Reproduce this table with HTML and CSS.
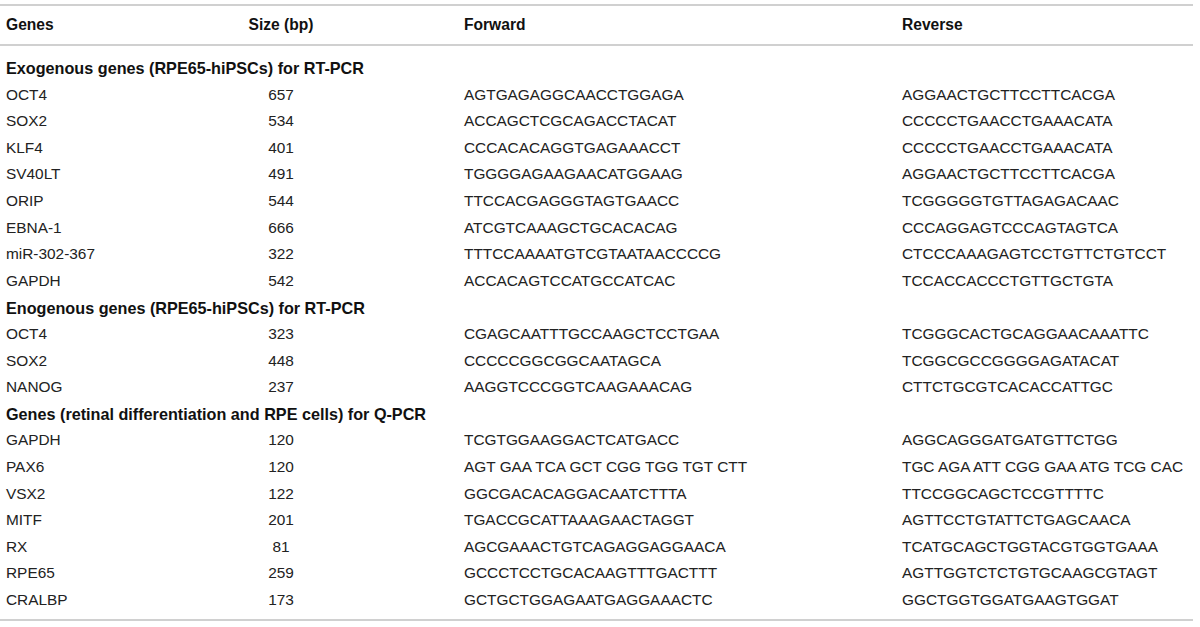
FILE: index.html
```html
<!DOCTYPE html>
<html lang="en">
<head>
<meta charset="utf-8">
<title>Primers</title>
<link rel="stylesheet" href="styles.css">
</head>
<body>
<table class="primers">
  <colgroup>
    <col class="c-gene"><col class="c-size"><col class="c-fwd"><col class="c-rev">
  </colgroup>
  <thead>
    <tr><th class="gene">Genes</th><th class="size">Size (bp)</th><th class="seq">Forward</th><th class="seq">Reverse</th></tr>
  </thead>
  <tbody>
    <tr class="group first"><td colspan="4">Exogenous genes (RPE65-hiPSCs) for RT-PCR</td></tr>
    <tr><td>OCT4</td><td class="size">657</td><td class="seq">AGTGAGAGGCAACCTGGAGA</td><td class="seq">AGGAACTGCTTCCTTCACGA</td></tr>
    <tr><td>SOX2</td><td class="size">534</td><td class="seq">ACCAGCTCGCAGACCTACAT</td><td class="seq">CCCCCTGAACCTGAAACATA</td></tr>
    <tr><td>KLF4</td><td class="size">401</td><td class="seq">CCCACACAGGTGAGAAACCT</td><td class="seq">CCCCCTGAACCTGAAACATA</td></tr>
    <tr><td>SV40LT</td><td class="size">491</td><td class="seq">TGGGGAGAAGAACATGGAAG</td><td class="seq">AGGAACTGCTTCCTTCACGA</td></tr>
    <tr><td>ORIP</td><td class="size">544</td><td class="seq">TTCCACGAGGGTAGTGAACC</td><td class="seq">TCGGGGGTGTTAGAGACAAC</td></tr>
    <tr><td>EBNA-1</td><td class="size">666</td><td class="seq">ATCGTCAAAGCTGCACACAG</td><td class="seq">CCCAGGAGTCCCAGTAGTCA</td></tr>
    <tr><td>miR-302-367</td><td class="size">322</td><td class="seq">TTTCCAAAATGTCGTAATAACCCCG</td><td class="seq">CTCCCAAAGAGTCCTGTTCTGTCCT</td></tr>
    <tr><td>GAPDH</td><td class="size">542</td><td class="seq">ACCACAGTCCATGCCATCAC</td><td class="seq">TCCACCACCCTGTTGCTGTA</td></tr>
    <tr class="group"><td colspan="4">Enogenous genes (RPE65-hiPSCs) for RT-PCR</td></tr>
    <tr><td>OCT4</td><td class="size">323</td><td class="seq">CGAGCAATTTGCCAAGCTCCTGAA</td><td class="seq">TCGGGCACTGCAGGAACAAATTC</td></tr>
    <tr><td>SOX2</td><td class="size">448</td><td class="seq">CCCCCGGCGGCAATAGCA</td><td class="seq">TCGGCGCCGGGGAGATACAT</td></tr>
    <tr><td>NANOG</td><td class="size">237</td><td class="seq">AAGGTCCCGGTCAAGAAACAG</td><td class="seq">CTTCTGCGTCACACCATTGC</td></tr>
    <tr class="group"><td colspan="4">Genes (retinal differentiation and RPE cells) for Q-PCR</td></tr>
    <tr><td>GAPDH</td><td class="size">120</td><td class="seq">TCGTGGAAGGACTCATGACC</td><td class="seq">AGGCAGGGATGATGTTCTGG</td></tr>
    <tr><td>PAX6</td><td class="size">120</td><td class="seq">AGT GAA TCA GCT CGG TGG TGT CTT</td><td class="seq">TGC AGA ATT CGG GAA ATG TCG CAC</td></tr>
    <tr><td>VSX2</td><td class="size">122</td><td class="seq">GGCGACACAGGACAATCTTTA</td><td class="seq">TTCCGGCAGCTCCGTTTTC</td></tr>
    <tr><td>MITF</td><td class="size">201</td><td class="seq">TGACCGCATTAAAGAACTAGGT</td><td class="seq">AGTTCCTGTATTCTGAGCAACA</td></tr>
    <tr><td>RX</td><td class="size">81</td><td class="seq">AGCGAAACTGTCAGAGGAGGAACA</td><td class="seq">TCATGCAGCTGGTACGTGGTGAAA</td></tr>
    <tr><td>RPE65</td><td class="size">259</td><td class="seq">GCCCTCCTGCACAAGTTTGACTTT</td><td class="seq">AGTTGGTCTCTGTGCAAGCGTAGT</td></tr>
    <tr class="last"><td>CRALBP</td><td class="size">173</td><td class="seq">GCTGCTGGAGAATGAGGAAACTC</td><td class="seq">GGCTGGTGGATGAAGTGGAT</td></tr>
  </tbody>
</table>
</body>
</html>
```

FILE: styles.css
```css
html, body {
  margin: 0;
  padding: 0;
  background: #ffffff;
}

body {
  font-family: "Liberation Sans", Arial, Helvetica, sans-serif;
  color: #222222;
}

.primers {
  margin-top: 4px;
  width: 1193px;
  border-collapse: collapse;
  table-layout: fixed;
  border-top: 2px solid #d0d0d0;
  border-bottom: 2px solid #d0d0d0;
}

.c-gene { width: 120px; }
.c-size { width: 322px; }
.c-fwd  { width: 438px; }
.c-rev  { width: 313px; }

.primers th,
.primers td {
  padding: 0 0 0 6px;
  text-align: left;
  white-space: nowrap;
  vertical-align: middle;
}

.primers thead th {
  height: 38px;
  font-size: 15.6px;
  font-weight: bold;
  color: #111111;
  border-bottom: 2px solid #d0d0d0;
}

.primers td {
  height: 26.6px;
  line-height: 26.6px;
  font-size: 15.4px;
}

.primers th.size,
.primers td.size {
  text-align: center;
  padding-left: 0;
}

.primers th.seq,
.primers td.seq {
  padding-left: 22px;
}

.primers tr.group td {
  font-weight: bold;
  color: #111111;
  font-size: 16.2px;
  line-height: 26px;
}

.primers tr.first td {
  padding-top: 9px;
}

.primers tr.last td {
  padding-bottom: 6px;
}
```
